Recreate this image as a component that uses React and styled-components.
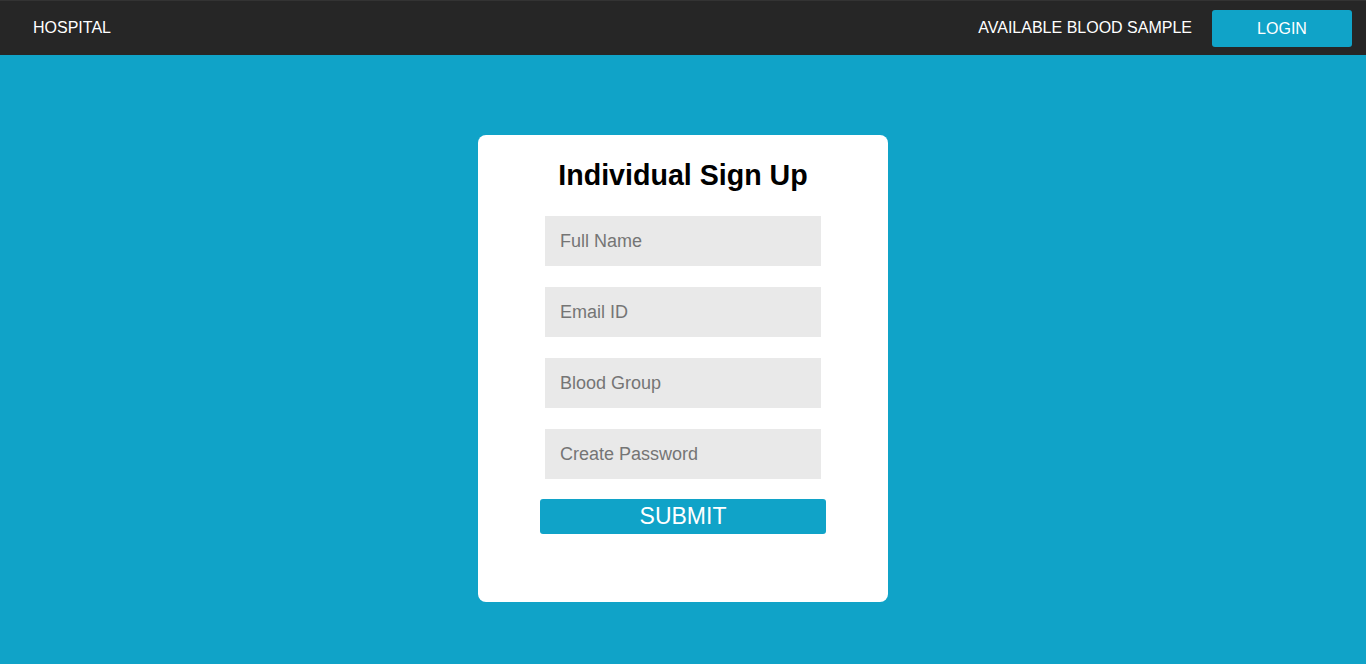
import React from 'react'
import styled, { createGlobalStyle } from 'styled-components'

const GlobalStyle = createGlobalStyle`
  * { box-sizing: border-box; }
  html, body {
    margin: 0;
    padding: 0;
    font-family: "Liberation Sans", Arial, sans-serif;
    background: #10a3c8;
  }
`

function App() {
  return (
    <>
      <GlobalStyle />
      <Nav>
        <Brand>HOSPITAL</Brand>
        <NavRight>
          <NavLink>AVAILABLE BLOOD SAMPLE</NavLink>
          <LoginButton>LOGIN</LoginButton>
        </NavRight>
      </Nav>
      <Main>
        <Card>
          <Title>Individual Sign Up</Title>
          <Form onSubmit={(e) => e.preventDefault()}>
            <Input type="text" placeholder="Full Name" />
            <Input type="email" placeholder="Email ID" />
            <Input type="text" placeholder="Blood Group" />
            <Input type="password" placeholder="Create Password" />
            <SubmitButton type="submit">SUBMIT</SubmitButton>
          </Form>
        </Card>
      </Main>
    </>
  )
}

export default App

const Nav = styled.nav`
  display: flex;
  justify-content: space-between;
  align-items: center;
  height: 55px;
  padding: 0 14px 0 33px;
  background-color: #262626;
  border-top: 1px solid #333;
`

const Brand = styled.div`
  color: #fff;
  font-size: 16px;
`

const NavRight = styled.div`
  display: flex;
  align-items: center;
  gap: 20px;
`

const NavLink = styled.a`
  color: #fff;
  font-size: 16px;
  cursor: pointer;
`

const LoginButton = styled.button`
  width: 140px;
  height: 37px;
  padding-top: 2px;
  border: none;
  border-radius: 3px;
  background-color: #10a3c8;
  color: #fff;
  font-family: inherit;
  font-size: 16px;
  cursor: pointer;
`

const Main = styled.main`
  display: flex;
  justify-content: center;
  padding-top: 80px;
  padding-bottom: 62px;
`

const Card = styled.div`
  display: flex;
  flex-direction: column;
  align-items: center;
  width: 410px;
  height: 467px;
  padding-top: 22px;
  background-color: #fff;
  border-radius: 8px;
`

const Title = styled.h1`
  margin: 0 0 23px;
  font-size: 28.6px;
  font-weight: bold;
  line-height: 36px;
  color: #000;
`

const Form = styled.form`
  display: flex;
  flex-direction: column;
  align-items: center;
  gap: 21px;
`

const Input = styled.input`
  width: 276px;
  height: 50px;
  padding: 0 15px;
  border: none;
  outline: none;
  background-color: #e9e9e9;
  font-family: inherit;
  font-size: 18px;
  color: #333;

  &::placeholder {
    color: #757575;
  }
`

const SubmitButton = styled.button`
  width: 286px;
  height: 35px;
  margin-top: -1px;
  border: none;
  border-radius: 3px;
  background-color: #10a3c8;
  color: #fff;
  font-family: inherit;
  font-size: 23px;
  line-height: 35px;
  padding: 0 0 2px;
  cursor: pointer;
`
